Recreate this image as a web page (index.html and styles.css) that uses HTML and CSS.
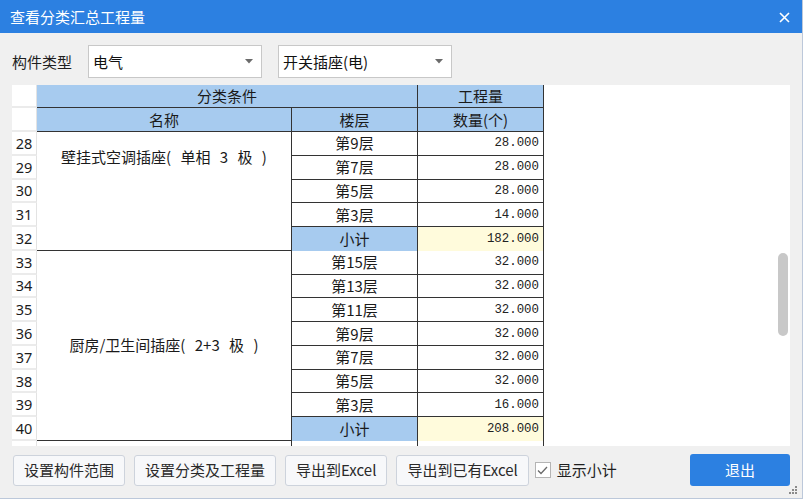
FILE: index.html
```html
<!DOCTYPE html>
<html lang="zh-CN">
<head>
<meta charset="utf-8">
<title>查看分类汇总工程量</title>
<link rel="stylesheet" href="styles.css">
</head>
<body>
<div class="window">
  <div class="titlebar">
    <span class="title">查看分类汇总工程量</span>
    <svg class="close" width="11" height="11" viewBox="0 0 11 11"><path d="M1 1L10 10M10 1L1 10" stroke="#fff" stroke-width="1.6"/></svg>
  </div>
  <div class="toolbar">
    <span class="label">构件类型</span>
    <div class="combo"><span>电气</span><svg width="8" height="5" viewBox="0 0 8 5"><path d="M0 0H8L4 4.5Z" fill="#6b6b6b"/></svg></div>
    <div class="combo"><span>开关插座(电)</span><svg width="8" height="5" viewBox="0 0 8 5"><path d="M0 0H8L4 4.5Z" fill="#6b6b6b"/></svg></div>
  </div>
  <div class="gridwrap">
    <div class="sheet">
      <div class="rh"></div><div class="hd span2">分类条件</div><div class="hd">工程量</div>
      <div class="rh"></div><div class="hd">名称</div><div class="hd">楼层</div><div class="hd">数量(个)</div>

      <div class="rh">28</div><div class="name top span5">壁挂式空调插座( 单相 3 极 )</div><div class="c">第9层</div><div class="c num">28.000</div>
      <div class="rh">29</div><div class="c">第7层</div><div class="c num">28.000</div>
      <div class="rh">30</div><div class="c">第5层</div><div class="c num">28.000</div>
      <div class="rh">31</div><div class="c">第3层</div><div class="c num">14.000</div>
      <div class="rh">32</div><div class="c sub">小计</div><div class="c num tot">182.000</div>

      <div class="rh">33</div><div class="name span8">厨房/卫生间插座( 2+3 极 )</div><div class="c">第15层</div><div class="c num">32.000</div>
      <div class="rh">34</div><div class="c">第13层</div><div class="c num">32.000</div>
      <div class="rh">35</div><div class="c">第11层</div><div class="c num">32.000</div>
      <div class="rh">36</div><div class="c">第9层</div><div class="c num">32.000</div>
      <div class="rh">37</div><div class="c">第7层</div><div class="c num">32.000</div>
      <div class="rh">38</div><div class="c">第5层</div><div class="c num">32.000</div>
      <div class="rh">39</div><div class="c">第3层</div><div class="c num">16.000</div>
      <div class="rh">40</div><div class="c sub">小计</div><div class="c num tot">208.000</div>

      <div class="rh"></div><div class="name"></div><div class="c"></div><div class="c num"></div>
    </div>
    <div class="thumb"></div>
  </div>
  <div class="footer">
    <button class="btn">设置构件范围</button>
    <button class="btn">设置分类及工程量</button>
    <button class="btn">导出到Excel</button>
    <button class="btn">导出到已有Excel</button>
    <label class="check"><span class="box"><svg width="11" height="9" viewBox="0 0 11 9"><path d="M1 4.5L4 7.5L10 1" fill="none" stroke="#6a6a6a" stroke-width="1.3"/></svg></span>显示小计</label>
    <button class="btn primary">退出</button>
  </div>
  <svg class="grip" width="10" height="10" viewBox="0 0 10 10" fill="#8a8a8a">
    <rect x="7" y="1" width="2" height="2"/>
    <rect x="4" y="4" width="2" height="2"/><rect x="7" y="4" width="2" height="2"/>
    <rect x="1" y="7" width="2" height="2"/><rect x="4" y="7" width="2" height="2"/><rect x="7" y="7" width="2" height="2"/>
  </svg>
</div>
</body>
</html>
```
FILE: styles.css
```css
* { box-sizing: border-box; }
html, body { margin: 0; padding: 0; background: #f0f0f0; }
body {
  font-family: "Noto Sans CJK SC", "Microsoft YaHei", sans-serif;
  color: #222;
}
.window {
  position: relative;
  width: 803px;
  height: 499px;
  background: #f0f0f0;
  border-right: 1px solid #bcc8da;
  border-bottom: 1px solid #bcc8da;
  display: flex;
  flex-direction: column;
}
.titlebar {
  height: 33px;
  flex: none;
  background: #2c80e1;
  display: flex;
  align-items: center;
  padding: 0 12px 0 10px;
  justify-content: space-between;
}
.title {
  color: #fff;
  font-size: 15px;
  line-height: 20px;
}
.close { display: block; margin-top: 1px; }
.toolbar {
  display: flex;
  align-items: center;
  gap: 16px;
  padding: 12px 0 0 12px;
  flex: none;
}
.label { font-size: 15px; line-height: 20px; color: #1e1e1e; }
.combo {
  width: 174px;
  height: 33px;
  background: #fff;
  border: 1px solid #c8c8c8;
  display: flex;
  align-items: center;
  justify-content: space-between;
  padding: 0 8px 0 4px;
  font-size: 15px;
  color: #111;
}
.combo span { line-height: 20px; }
.combo svg { display: block; }
.gridwrap {
  position: relative;
  margin: 7px 12px 0 12px;
  height: 361px;
  flex: none;
  background: #fff;
  overflow: hidden;
}
.sheet {
  display: grid;
  grid-template-columns: 25px 255px 126px 126px;
  grid-template-rows: 23px 24px repeat(14, 23.77px);
  width: 532px;
  font-size: 15px;
}
.sheet > div {
  display: flex;
  align-items: center;
  justify-content: center;
  line-height: 20px;
  white-space: pre;
}
.rh {
  background: #fff;
  border-right: 1px solid #e3e3e3;
  border-bottom: 2px solid #ebebeb;
  font-family: "Noto Sans", sans-serif;
  font-size: 14.5px;
  color: #1c1c1c;
}
.hd {
  background: #a7cbef;
  border-right: 1px solid #333;
  border-bottom: 1px solid #333;
  color: #1a1a1a;
}
.span2 { grid-column: span 2; }
.span5 { grid-row: span 5; }
.span8 { grid-row: span 8; }
.name {
  border-right: 1px solid #333;
  border-bottom: 1px solid #333;
  word-spacing: 6px;
  color: #1a1a1a;
}
.name.top { align-items: flex-start !important; padding-top: 15px; }
.c {
  border-right: 1px solid #333;
  border-bottom: 1px solid #333;
  color: #1a1a1a;
}
.num {
  justify-content: flex-end !important;
  padding-right: 4px;
  font-family: "Liberation Mono", monospace;
  font-size: 12.4px;
  color: #222;
}
.sub { background: #a7cbef; border-bottom: none; }
.tot { background: #fffbdc; border-bottom: none; }
.thumb {
  position: absolute;
  right: 2px;
  top: 168px;
  width: 10px;
  height: 83px;
  border-radius: 5px;
  background: #c8c8c8;
}
.footer {
  display: flex;
  align-items: center;
  margin-top: 8px;
  padding: 0 12px 0 13px;
  height: 32px;
}
.btn {
  height: 31px;
  padding: 0 10px;
  margin-right: 9px;
  background: #f7f8fa;
  border: 1px solid #cdd3dc;
  border-radius: 3px;
  font-family: "Noto Sans CJK SC", sans-serif;
  font-size: 15px;
  color: #2a2a2a;
  line-height: 20px;
}
.check {
  display: flex;
  align-items: center;
  font-size: 15px;
  color: #1e1e1e;
  line-height: 20px;
  margin-left: -3px;
}
.box {
  width: 16px;
  height: 16px;
  border: 1px solid #b4b4b4;
  background: #fff;
  display: flex;
  align-items: center;
  justify-content: center;
  margin-right: 6px;
}
.box svg { display: block; }
.btn.primary {
  margin-left: auto;
  margin-right: 0;
  width: 100px;
  height: 32px;
  background: #2c80e1;
  border: none;
  color: #fff;
}
.grip { position: absolute; right: 4px; bottom: 3px; }
```
